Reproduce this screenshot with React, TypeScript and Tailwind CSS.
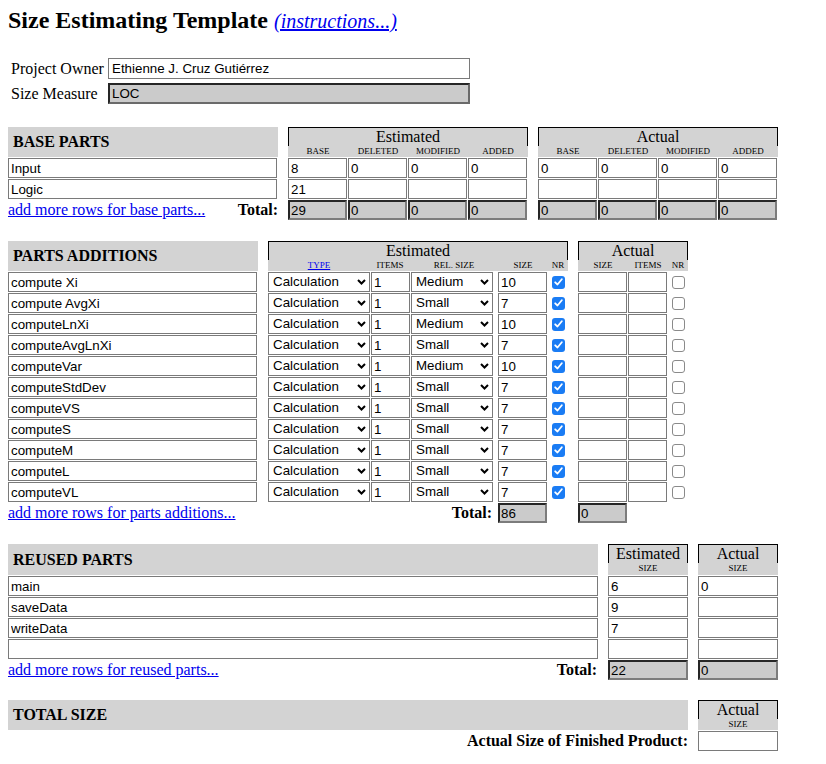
import React from "react";

const inputCls =
  "block h-[20px] border border-[#7a7a7a] bg-white pl-[2px] font-['Liberation_Sans',Arial,sans-serif] text-[13.33px] leading-[18px] text-black outline-none";
const roCls =
  "block h-[20px] border-2 border-t-[#262626] border-l-[#262626] border-r-[#7c7c7c] border-b-[#7c7c7c] bg-[#cbcbcb] pl-[1px] font-['Liberation_Sans',Arial,sans-serif] text-[13.33px] leading-[16px] text-black outline-none";

function TI({ w, v, ro }: { w: string; v?: string; ro?: boolean }) {
  return (
    <input
      type="text"
      readOnly
      defaultValue={v ?? ""}
      className={`${ro ? roCls : inputCls} ${w}`}
    />
  );
}

function Sel({ w, v, opts }: { w: string; v: string; opts: string[] }) {
  return (
    <div className={`relative h-[20px] ${w}`}>
      <select
        defaultValue={v}
        className="block h-[20px] w-full appearance-none border border-[#7a7a7a] bg-white pl-[4px] font-['Liberation_Sans',Arial,sans-serif] text-[13.33px] leading-[18px] text-black outline-none"
      >
        {opts.map((o) => (
          <option key={o}>{o}</option>
        ))}
      </select>
      <svg
        className="pointer-events-none absolute right-[4px] top-[7px]"
        width="9"
        height="6"
        viewBox="0 0 9 6"
      >
        <path d="M1 1 L4.5 4.5 L8 1" stroke="black" strokeWidth="2" fill="none" />
      </svg>
    </div>
  );
}

function Check({ on }: { on: boolean }) {
  return (
    <div className="flex h-[20px] w-[20px] items-center justify-center">
      {on ? (
        <span className="flex h-[13px] w-[13px] items-center justify-center rounded-[3px] bg-[#1a7cf4]">
          <svg width="9" height="8" viewBox="0 0 9 8">
            <path
              d="M1.2 4.3 L3.5 6.5 L7.8 1.3"
              stroke="white"
              strokeWidth="1.8"
              fill="none"
              strokeLinecap="round"
              strokeLinejoin="round"
            />
          </svg>
        </span>
      ) : (
        <span className="block h-[13px] w-[13px] rounded-[3px] border border-[#8a8a8a] bg-white" />
      )}
    </div>
  );
}

type Col = { w: string; label: string; link?: boolean };

function GroupHeader({ title, w, cols }: { title: string; w: string; cols: Col[] }) {
  return (
    <div className={`flex flex-col bg-[#d3d3d3] ${w}`}>
      <div className="h-[19px] border-x border-t border-black text-center text-[16px] leading-[17px]">
        {title}
      </div>
      <div className="flex flex-1">
        {cols.map((c) => (
          <div key={c.label} className={`text-center text-[9px] leading-[11px] ${c.w}`}>
            {c.link ? <a className="text-[#0000ee] underline">{c.label}</a> : c.label}
          </div>
        ))}
      </div>
    </div>
  );
}

function SectionTitle({ w, text }: { w: string; text: string }) {
  return (
    <div className={`flex items-center bg-[#d3d3d3] pl-[5px] text-[16px] font-bold ${w}`}>
      {text}
    </div>
  );
}

const baseCols: Col[] = [
  { w: "w-[60px]", label: "BASE" },
  { w: "w-[60px]", label: "DELETED" },
  { w: "w-[60px]", label: "MODIFIED" },
  { w: "w-[60px]", label: "ADDED" },
];

const baseRows = [
  { name: "Input", est: ["8", "0", "0", "0"], act: ["0", "0", "0", "0"] },
  { name: "Logic", est: ["21", "", "", ""], act: ["", "", "", ""] },
];

const additions = [
  { name: "compute Xi", rel: "Medium", size: "10" },
  { name: "compute AvgXi", rel: "Small", size: "7" },
  { name: "computeLnXi", rel: "Medium", size: "10" },
  { name: "computeAvgLnXi", rel: "Small", size: "7" },
  { name: "computeVar", rel: "Medium", size: "10" },
  { name: "computeStdDev", rel: "Small", size: "7" },
  { name: "computeVS", rel: "Small", size: "7" },
  { name: "computeS", rel: "Small", size: "7" },
  { name: "computeM", rel: "Small", size: "7" },
  { name: "computeL", rel: "Small", size: "7" },
  { name: "computeVL", rel: "Small", size: "7" },
];

const reused = [
  { name: "main", est: "6", act: "0" },
  { name: "saveData", est: "9", act: "" },
  { name: "writeData", est: "7", act: "" },
  { name: "", est: "", act: "" },
];

const typeOpts = ["Calculation", "Data", "I/O", "Logic", "Set-up", "Text"];
const relOpts = ["Very Small", "Small", "Medium", "Large", "Very Large"];

export default function App() {
  return (
    <div className="min-h-[764px] w-[826px] bg-white px-2 pt-[6px] font-['Liberation_Serif','Times_New_Roman',serif] text-black">
      {/* Title */}
      <div className="h-[28px] whitespace-nowrap text-[24px] font-bold leading-[28px]">
        Size Estimating Template{" "}
        <a className="text-[20px] font-normal italic text-[#0000ee] underline">(instructions...)</a>
      </div>

      {/* Owner / measure */}
      <div className="mt-[24px] flex flex-col gap-[4px]">
        <div className="flex h-[21px] items-center">
          <span className="w-[100px] pl-[3px] text-[16px] leading-[21px]">Project Owner</span>
          <input
            type="text"
            readOnly
            defaultValue="Ethienne J. Cruz Gutiérrez"
            className="block h-[21px] w-[362px] border border-[#7a7a7a] bg-white pl-[3px] font-['Liberation_Sans',Arial,sans-serif] text-[13.33px] text-black outline-none"
          />
        </div>
        <div className="flex h-[21px] items-center">
          <span className="w-[100px] pl-[3px] text-[16px] leading-[21px]">Size Measure</span>
          <input
            type="text"
            readOnly
            defaultValue="LOC"
            className="block h-[21px] w-[362px] border-2 border-t-[#262626] border-l-[#262626] border-r-[#6a6a6a] border-b-[#6a6a6a] bg-[#cbcbcb] pl-[2px] font-['Liberation_Sans',Arial,sans-serif] text-[13.33px] text-black outline-none"
          />
        </div>
      </div>

      {/* BASE PARTS */}
      <div className="mt-[23px] flex flex-col gap-[1px]">
        <div className="flex h-[30px]">
          <SectionTitle w="w-[270px]" text="BASE PARTS" />
          <div className="ml-[10px] flex">
            <GroupHeader title="Estimated" w="w-[240px]" cols={baseCols} />
          </div>
          <div className="ml-[10px] flex">
            <GroupHeader title="Actual" w="w-[240px]" cols={baseCols} />
          </div>
        </div>
        {baseRows.map((r) => (
          <div key={r.name} className="flex h-[20px]">
            <div className="w-[270px]">
              <TI w="w-[269px]" v={r.name} />
            </div>
            <div className="ml-[10px] flex w-[240px]">
              {r.est.map((v, i) => (
                <div key={i} className="w-[60px]">
                  <TI w="w-[59px]" v={v} />
                </div>
              ))}
            </div>
            <div className="ml-[10px] flex w-[240px]">
              {r.act.map((v, i) => (
                <div key={i} className="w-[60px]">
                  <TI w="w-[59px]" v={v} />
                </div>
              ))}
            </div>
          </div>
        ))}
        <div className="flex h-[20px]">
          <div className="flex w-[270px] items-center justify-between text-[16px] leading-[20px]">
            <a className="text-[#0000ee] underline">add more rows for base parts...</a>
            <span className="font-bold">Total:</span>
          </div>
          <div className="ml-[10px] flex w-[240px]">
            {["29", "0", "0", "0"].map((v, i) => (
              <div key={i} className="w-[60px]">
                <TI ro w="w-[59px]" v={v} />
              </div>
            ))}
          </div>
          <div className="ml-[10px] flex w-[240px]">
            {["0", "0", "0", "0"].map((v, i) => (
              <div key={i} className="w-[60px]">
                <TI ro w="w-[59px]" v={v} />
              </div>
            ))}
          </div>
        </div>
      </div>

      {/* PARTS ADDITIONS */}
      <div className="mt-[21px] flex flex-col gap-[1px]">
        <div className="flex h-[30px]">
          <SectionTitle w="w-[250px]" text="PARTS ADDITIONS" />
          <div className="ml-[10px] flex">
            <GroupHeader
              title="Estimated"
              w="w-[300px]"
              cols={[
                { w: "w-[102px]", label: "TYPE", link: true },
                { w: "w-[40px]", label: "ITEMS" },
                { w: "w-[88px]", label: "REL. SIZE" },
                { w: "w-[50px]", label: "SIZE" },
                { w: "w-[20px]", label: "NR" },
              ]}
            />
          </div>
          <div className="ml-[10px] flex">
            <GroupHeader
              title="Actual"
              w="w-[110px]"
              cols={[
                { w: "w-[50px]", label: "SIZE" },
                { w: "w-[40px]", label: "ITEMS" },
                { w: "w-[20px]", label: "NR" },
              ]}
            />
          </div>
        </div>
        {additions.map((r) => (
          <div key={r.name} className="flex h-[20px]">
            <div className="w-[250px]">
              <TI w="w-[249px]" v={r.name} />
            </div>
            <div className="ml-[10px] flex w-[300px]">
              <Sel w="w-[102px]" v="Calculation" opts={typeOpts} />
              <div className="ml-[1px]">
                <TI w="w-[39px]" v="1" />
              </div>
              <div className="ml-[1px]">
                <Sel w="w-[82px]" v={r.rel} opts={relOpts} />
              </div>
              <div className="ml-[5px]">
                <TI w="w-[49px]" v={r.size} />
              </div>
              <div className="ml-[1px]">
                <Check on />
              </div>
            </div>
            <div className="ml-[10px] flex w-[110px]">
              <TI w="w-[49px]" v="" />
              <div className="ml-[1px]">
                <TI w="w-[39px]" v="" />
              </div>
              <div className="ml-[1px]">
                <Check on={false} />
              </div>
            </div>
          </div>
        ))}
        <div className="flex h-[20px]">
          <div className="flex w-[250px] items-center text-[16px] leading-[20px]">
            <a className="text-[#0000ee] underline">add more rows for parts additions...</a>
          </div>
          <div className="ml-[10px] flex w-[300px]">
            <div className="w-[230px] pr-[6px] text-right text-[16px] font-bold leading-[20px]">Total:</div>
            <TI ro w="w-[49px]" v="86" />
          </div>
          <div className="ml-[10px] flex w-[110px]">
            <TI ro w="w-[49px]" v="0" />
          </div>
        </div>
      </div>

      {/* REUSED PARTS */}
      <div className="mt-[21px] flex flex-col gap-[1px]">
        <div className="flex h-[31px]">
          <SectionTitle w="w-[590px]" text="REUSED PARTS" />
          <div className="ml-[10px] flex">
            <GroupHeader title="Estimated" w="w-[80px]" cols={[{ w: "w-[80px]", label: "SIZE" }]} />
          </div>
          <div className="ml-[10px] flex">
            <GroupHeader title="Actual" w="w-[80px]" cols={[{ w: "w-[80px]", label: "SIZE" }]} />
          </div>
        </div>
        {reused.map((r, i) => (
          <div key={i} className="flex h-[20px]">
            <div className="w-[590px]">
              <TI w="w-[590px]" v={r.name} />
            </div>
            <div className="ml-[10px]">
              <TI w="w-[80px]" v={r.est} />
            </div>
            <div className="ml-[10px]">
              <TI w="w-[80px]" v={r.act} />
            </div>
          </div>
        ))}
        <div className="flex h-[20px]">
          <div className="flex w-[590px] items-center justify-between text-[16px] leading-[20px]">
            <a className="text-[#0000ee] underline">add more rows for reused parts...</a>
            <span className="pr-[1px] font-bold">Total:</span>
          </div>
          <div className="ml-[10px]">
            <TI ro w="w-[80px]" v="22" />
          </div>
          <div className="ml-[10px]">
            <TI ro w="w-[80px]" v="0" />
          </div>
        </div>
      </div>

      {/* TOTAL SIZE */}
      <div className="mt-[20px] flex flex-col gap-[1px]">
        <div className="flex h-[30px]">
          <SectionTitle w="w-[680px]" text="TOTAL SIZE" />
          <div className="ml-[10px] flex">
            <GroupHeader title="Actual" w="w-[80px]" cols={[{ w: "w-[80px]", label: "SIZE" }]} />
          </div>
        </div>
        <div className="flex h-[20px]">
          <div className="w-[680px] text-right text-[16px] font-bold leading-[20px]">
            Actual Size of Finished Product:
          </div>
          <div className="ml-[10px]">
            <TI w="w-[80px]" v="" />
          </div>
        </div>
      </div>
    </div>
  );
}
